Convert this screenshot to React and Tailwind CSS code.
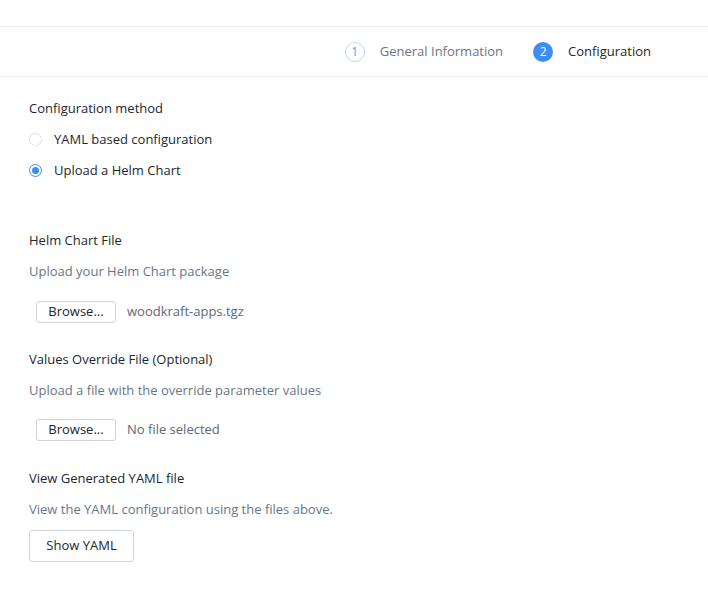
import { useState } from "react";

const font = { fontFamily: "'Open Sans', Lato, sans-serif" };

function Step({ n, label, active }) {
  return (
    <div className="flex items-center gap-[15px]">
      <div
        className={
          active
            ? "w-[20px] h-[20px] rounded-full bg-[#3c8ef0] text-white text-[12px] flex items-center justify-center"
            : "w-[20px] h-[20px] rounded-full border border-[#b9d8fb] text-[#5a9ef2] text-[12px] flex items-center justify-center"
        }
      >
        {n}
      </div>
      <span className={active ? "text-[13px] text-[#22272e]" : "text-[13px] text-[#6b7586]"}>
        {label}
      </span>
    </div>
  );
}

function Radio({ checked, label, onClick }) {
  return (
    <div className="h-[31px] flex items-center gap-[12px] cursor-pointer" onClick={onClick}>
      <div
        className={
          checked
            ? "w-[13px] h-[13px] rounded-full border border-[#3c8ef0] flex items-center justify-center"
            : "w-[13px] h-[13px] rounded-full border border-[#dde1e6]"
        }
      >
        {checked && <div className="w-[7px] h-[7px] rounded-full bg-[#3c8ef0]" />}
      </div>
      <span className="text-[13px] text-[#22272e]">{label}</span>
    </div>
  );
}

function FileRow({ file }) {
  return (
    <div className="flex items-center gap-[11px] pl-[7px]">
      <button className="h-[22px] w-[80px] border border-[#cfd5dd] rounded-[3px] bg-white text-[13px] text-[#22272e]">
        Browse...
      </button>
      <span className="text-[13px] text-[#5d6878]">{file}</span>
    </div>
  );
}

export default function App() {
  const [method, setMethod] = useState("helm");
  return (
    <div className="w-[708px] h-[607px] bg-white" style={font}>
      <div className="mt-[26px] h-[51px] border-t border-b border-[#eceef0] flex items-center justify-end pr-[57px] gap-[30px]">
        <Step n="1" label="General Information" />
        <Step n="2" label="Configuration" active />
      </div>

      <div className="pl-[29px] pt-[16px]">
        <div className="h-[31px] flex items-center text-[13px] text-[#22272e]">Configuration method</div>
        <Radio
          label="YAML based configuration"
          checked={method === "yaml"}
          onClick={() => setMethod("yaml")}
        />
        <Radio
          label="Upload a Helm Chart"
          checked={method === "helm"}
          onClick={() => setMethod("helm")}
        />

        <div className="mt-[39px] h-[31px] flex items-center text-[13px] text-[#22272e]">Helm Chart File</div>
        <div className="h-[31px] flex items-center text-[13px] text-[#6a7688]">Upload your Helm Chart package</div>
        <div className="mt-[14px]">
          <FileRow file="woodkraft-apps.tgz" />
        </div>

        <div className="mt-[21px] h-[31px] flex items-center text-[13px] text-[#22272e]">Values Override File (Optional)</div>
        <div className="h-[31px] flex items-center text-[13px] text-[#6a7688]">Upload a file with the override parameter values</div>
        <div className="mt-[13px]">
          <FileRow file="No file selected" />
        </div>

        <div className="mt-[22px] h-[31px] flex items-center text-[13px] text-[#22272e]">View Generated YAML file</div>
        <div className="h-[31px] flex items-center text-[13px] text-[#6a7688]">View the YAML configuration using the files above.</div>
        <button className="mt-[5px] h-[32px] w-[105px] border border-[#cfd5dd] rounded-[3px] bg-white text-[13px] text-[#22272e]">
          Show YAML
        </button>
      </div>
    </div>
  );
}
